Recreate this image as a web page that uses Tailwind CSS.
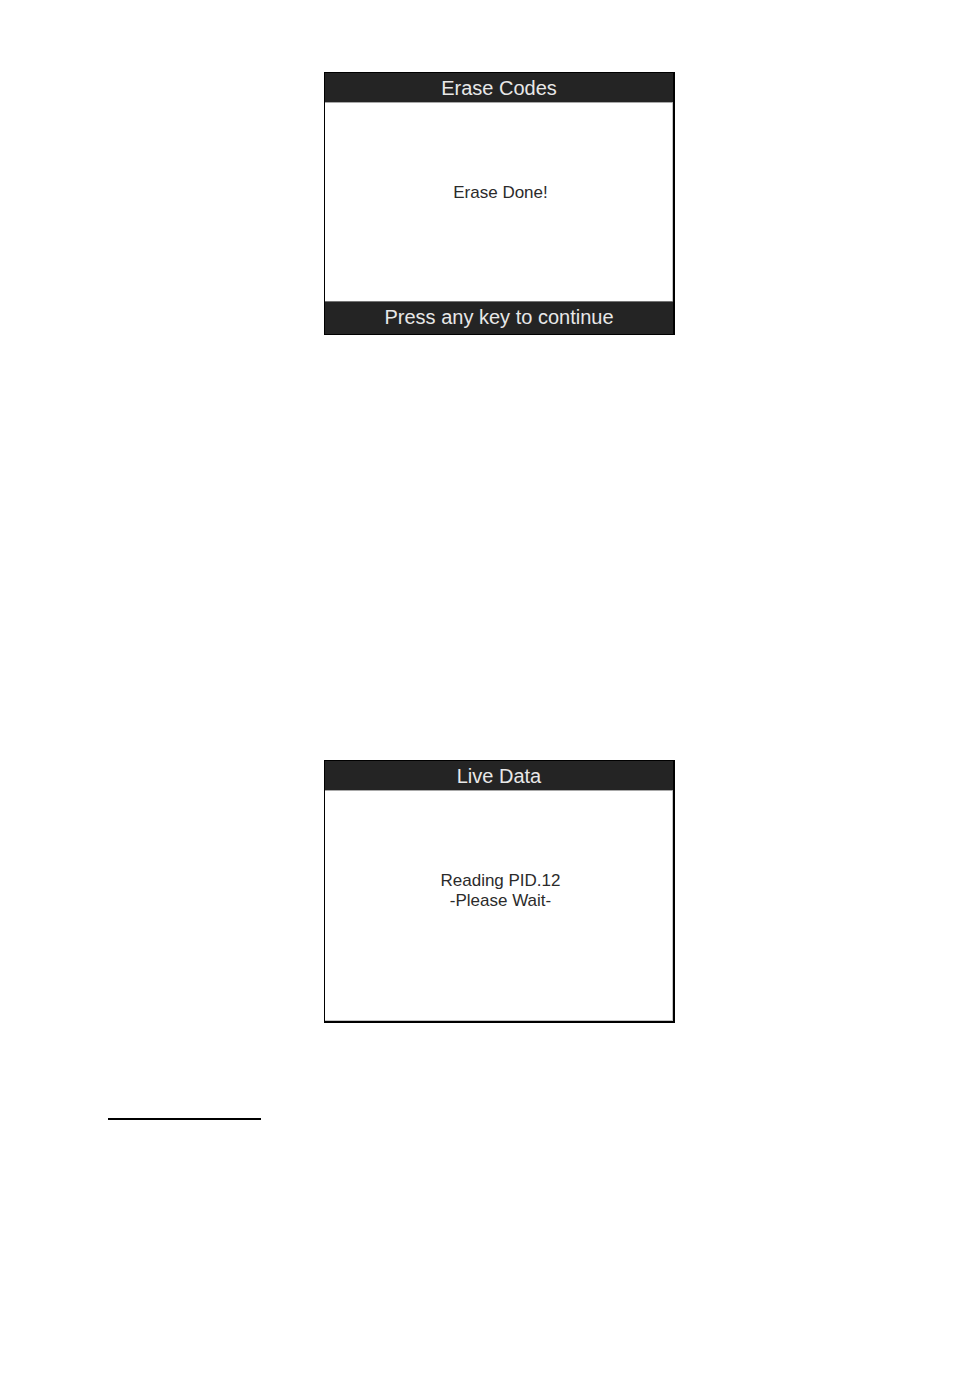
<!DOCTYPE html>
<html lang="en">
<head>
<meta charset="utf-8">
<meta name="viewport" content="width=device-width, initial-scale=1">
<title>Erase Codes and Live Data</title>
<script src="https://cdn.jsdelivr.net/npm/@tailwindcss/browser@4"></script>
</head>
<body class="bg-white font-['Liberation_Sans',Arial,sans-serif] text-[#2b2b2b]">
<main class="flex min-h-screen flex-col items-center pt-[72px] pr-[63px] pb-12 pl-[108px]">
  <section class="flex min-h-[263px] w-full max-w-[351px] flex-col border border-r-2 border-black">
    <h1 class="border-b border-[#a8a8a8] bg-[#242424] pt-px text-center text-xl text-[#e8e8e8]">Erase Codes</h1>
    <div class="flex grow flex-col items-center border-r border-[#c4c4c4] pt-20 pl-1 text-center text-[17px] leading-5">
      <p>Erase Done!</p>
    </div>
    <p class="border-t border-[#747474] bg-[#242424] pt-px pb-0.5 text-center text-xl leading-[29px] text-[#e8e8e8]">Press any key to continue</p>
  </section>

  <section class="mt-[425px] flex min-h-[263px] w-full max-w-[351px] flex-col border border-r-2 border-b-2 border-black">
    <h2 class="border-b border-[#a8a8a8] bg-[#242424] pt-px text-center text-xl text-[#e8e8e8]">Live Data</h2>
    <div class="flex grow flex-col items-center border-r border-b border-[#c4c4c4] pt-20 pl-1 text-center text-[17px] leading-5">
      <p>Reading PID.12</p>
      <p>-Please Wait-</p>
    </div>
  </section>

  <hr class="mt-[95px] w-[153px] self-start border-t-2 border-black">
</main>
</body>
</html>
